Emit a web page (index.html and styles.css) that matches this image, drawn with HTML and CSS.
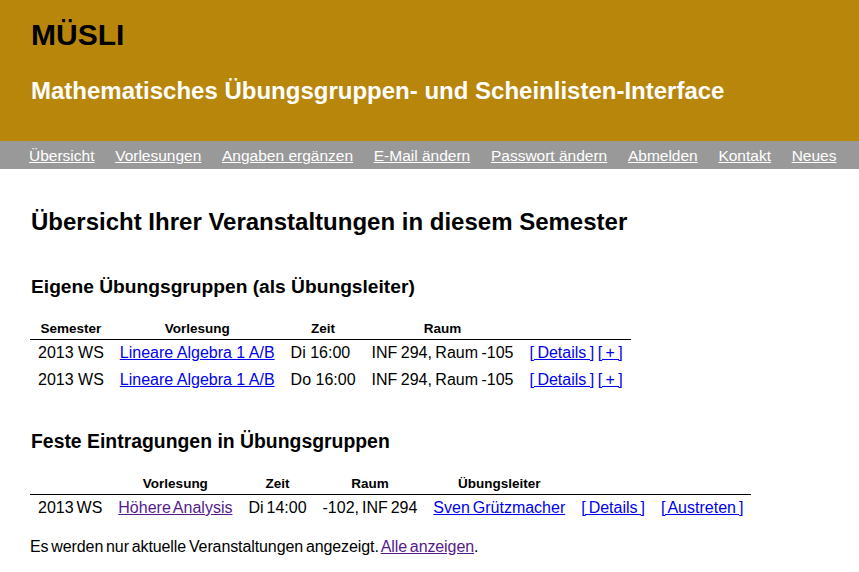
FILE: index.html
```html
<!DOCTYPE html>
<html lang="de">
<head>
<meta charset="utf-8">
<title>MÜSLI</title>
<link rel="stylesheet" href="styles.css">
</head>
<body>
<header class="masthead">
  <h1 class="brand">MÜSLI</h1>
  <p class="tagline">Mathematisches Übungsgruppen- und Scheinlisten-Interface</p>
</header>
<nav class="menu">
  <a href="#">Übersicht</a>
  <a href="#">Vorlesungen</a>
  <a href="#">Angaben ergänzen</a>
  <a href="#">E-Mail ändern</a>
  <a href="#">Passwort ändern</a>
  <a href="#">Abmelden</a>
  <a href="#">Kontakt</a>
  <a href="#">Neues</a>
</nav>
<main class="content">
  <h2 class="page-title">Übersicht Ihrer Veranstaltungen in diesem Semester</h2>

  <h3 class="section-title">Eigene Übungsgruppen (als Übungsleiter)</h3>
  <table class="list list-own">
    <thead>
      <tr><th>Semester</th><th>Vorlesung</th><th>Zeit</th><th>Raum</th><th></th></tr>
    </thead>
    <tbody>
      <tr><td>2013 WS</td><td><a href="#">Lineare Algebra 1 A/B</a></td><td>Di 16:00</td><td class="room">INF 294, Raum -105</td><td class="actions"><a href="#">[ Details ]</a> <a href="#">[ + ]</a></td></tr>
      <tr><td>2013 WS</td><td><a href="#">Lineare Algebra 1 A/B</a></td><td>Do 16:00</td><td class="room">INF 294, Raum -105</td><td class="actions"><a href="#">[ Details ]</a> <a href="#">[ + ]</a></td></tr>
    </tbody>
  </table>

  <h3 class="section-title second">Feste Eintragungen in Übungsgruppen</h3>
  <table class="list list-fixed">
    <thead>
      <tr><th></th><th>Vorlesung</th><th>Zeit</th><th>Raum</th><th>Übungsleiter</th><th></th><th></th></tr>
    </thead>
    <tbody>
      <tr><td>2013 WS</td><td><a class="visited" href="#">Höhere Analysis</a></td><td>Di 14:00</td><td class="room">-102, INF 294</td><td><a href="#">Sven Grützmacher</a></td><td class="actions"><a href="#">[ Details ]</a></td><td class="actions"><a href="#">[ Austreten ]</a></td></tr>
    </tbody>
  </table>

  <p class="note">Es werden nur aktuelle Veranstaltungen angezeigt. <a class="visited" href="#">Alle anzeigen</a>.</p>
</main>
</body>
</html>
```

FILE: styles.css
```css
html, body {
  margin: 0;
  padding: 0;
  background: #ffffff;
  color: #000000;
  font-family: "Liberation Sans", Arial, sans-serif;
  font-size: 16px;
}

a {
  color: #0000ee;
}

a.visited {
  color: #551a8b;
}

.masthead {
  background: #b8860b;
  padding: 17px 31px 36px 31px;
}

.brand {
  margin: 0;
  font-size: 30px;
  line-height: 36px;
  font-weight: bold;
  color: #000;
}

.tagline {
  margin: 24px 0 0 0;
  font-size: 24px;
  line-height: 28px;
  font-weight: bold;
  color: #fff;
}

.menu {
  background: #999999;
  height: 28px;
  display: flex;
  align-items: center;
  gap: 20.7px;
  padding-left: 29px;
}

.menu a {
  color: #ffffff;
  font-size: 15.5px;
  position: relative;
  top: 1px;
}

.content {
  padding: 0 30px;
}

.page-title {
  margin: 39px 0 0 1px;
  font-size: 24px;
  line-height: 28px;
}

.section-title {
  margin: 40px 0 0 1px;
  font-size: 19.2px;
  line-height: 22px;
}

.section-title.second {
  margin-top: 36px;
  font-size: 19.4px;
}

.list {
  border-collapse: collapse;
  margin-top: 22px;
}

.list-fixed {
  margin-top: 23px;
}

.list th {
  font-size: 13.5px;
  font-weight: bold;
  padding: 1px 8px 2px 8px;
  line-height: 16px;
  border-bottom: 1px solid #000;
}

.list td {
  font-size: 16px;
  padding: 3px 8px 5px 8px;
  line-height: 19px;
  white-space: nowrap;
}

.list-own td.room,
.list-own td.actions {
  word-spacing: -1px;
}

.list-fixed td {
  word-spacing: -1.5px;
}

.note {
  margin: 16px 0 0 0;
  font-size: 16px;
  line-height: 18px;
  word-spacing: -1.5px;
  letter-spacing: -0.1px;
}
```
